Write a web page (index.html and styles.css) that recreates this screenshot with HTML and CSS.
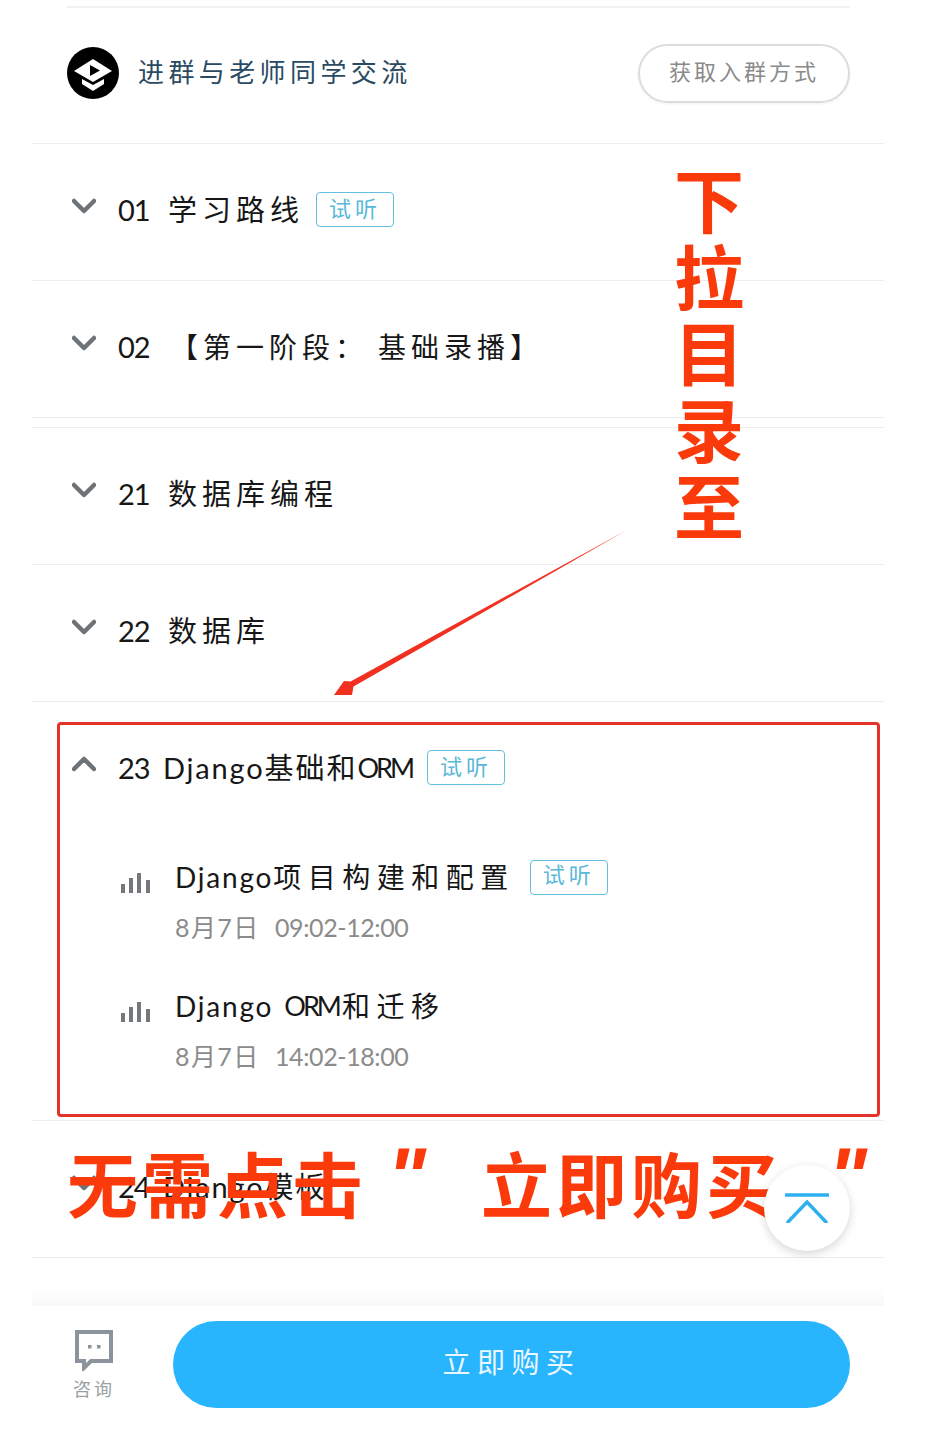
FILE: index.html
```html
<!DOCTYPE html>
<html lang="zh-CN">
<head>
<meta charset="utf-8">
<title>课程目录</title>
<link rel="stylesheet" href="styles.css">
</head>
<body>
<main class="page">
  <div class="top-line"></div>
  <section class="group">
    <svg class="group-logo" viewBox="0 0 52 52"><circle cx="26" cy="26" r="26" fill="#000"/><path d="M26 12 45 24 26 35 7 24Z" fill="#fff"/><path d="M15 32 26 38 37 32V37L26 44 15 37Z" fill="#fff"/><path d="M23 18 33 23.500 23 29Z" fill="#000"/></svg>
    <span class="group-text">进群与老师同学交流</span>
    <a class="group-btn">获取入群方式</a>
  </section>

  <div class="list">
    <div class="row">
      <svg class="chev" viewBox="0 0 24 16"><path d="M2 3 12 13 22 3"/></svg>
      <span class="title"><span class="num">01</span><span class="t1">学习路线</span></span><span class="tag">试听</span>
    </div>
    <div class="row">
      <svg class="chev" viewBox="0 0 24 16"><path d="M2 3 12 13 22 3"/></svg>
      <span class="title"><span class="num">02</span><span class="t2">【第一阶段：<span class="t2-b">基础录播】</span></span></span>
    </div>
    <div class="gap"></div>
    <div class="row">
      <svg class="chev" viewBox="0 0 24 16"><path d="M2 3 12 13 22 3"/></svg>
      <span class="title"><span class="num">21</span><span class="t3">数据库编程</span></span>
    </div>
    <div class="row">
      <svg class="chev" viewBox="0 0 24 16"><path d="M2 3 12 13 22 3"/></svg>
      <span class="title"><span class="num">22</span><span class="t3">数据库</span></span>
    </div>
    <div class="open">
      <div class="open-head">
        <svg class="chev" viewBox="0 0 24 16"><path d="M2 13 12 3 22 13"/></svg>
        <span class="title"><span class="num short">23</span><span class="latin">Django</span><span class="cn-tight">基础和</span><span class="orm">ORM</span></span><span class="tag">试听</span>
      </div>
      <div class="lesson first">
        <svg class="bars" viewBox="0 0 30 22"><path d="M2 12V21M10 6V21M18 1V21M27 8V21"/></svg>
        <div class="lesson-body">
          <div class="lesson-title"><span class="latin">Django</span><span class="cn-tight">项目构建和配置</span><span class="tag">试听</span></div>
          <div class="lesson-time"><span class="date">8月7日</span><span>09:02-12:00</span></div>
        </div>
      </div>
      <div class="lesson">
        <svg class="bars" viewBox="0 0 30 22"><path d="M2 12V21M10 6V21M18 1V21M27 8V21"/></svg>
        <div class="lesson-body">
          <div class="lesson-title"><span class="latin">Django</span><span class="orm orm-2">ORM</span><span class="cn-tight">和迁移</span></div>
          <div class="lesson-time"><span class="date">8月7日</span><span>14:02-18:00</span></div>
        </div>
      </div>
    </div>
    <div class="row">
      <svg class="chev" viewBox="0 0 24 16"><path d="M2 3 12 13 22 3"/></svg>
      <span class="title"><span class="num short">24</span><span class="latin">Django</span><span class="cn-tight">模板</span></span>
    </div>
  </div>
  <div class="fade"></div>
  <footer class="bar">
    <div class="consult">
      <svg class="consult-icon" viewBox="0 0 38 41"><path d="M2 2H36V31H16L9 38V31H2Z"/><rect x="13" y="15" width="3.5" height="3.5"/><rect x="22" y="15" width="3.5" height="3.5"/></svg>
      <span>咨询</span>
    </div>
    <a class="buy">立即购买</a>
  </footer>

  <div class="mark-box"></div>
  <svg class="arrow" viewBox="0 0 944 1436"><path d="M627 530 353.500 686.600 352 695 334 695 344 681 350.500 681.400Z"/></svg>
  <div class="note-v">下拉目录至</div>
  <div class="note-h"><span>无需点击</span><span class="q1">"</span><span class="buy-note">立即购买</span><span class="q2">"</span></div>
  <button class="to-top" aria-label="回到顶部"><svg viewBox="0 0 44 30"><path d="M1 2H43M3 29 22 9 41 29"/></svg></button>
</main>
</body>
</html>
```
FILE: styles.css
```css
* { box-sizing: border-box; }
html, body { margin: 0; padding: 0; background: #fff; }
body { font-family: "Lato", "Noto Sans CJK SC", sans-serif; color: #1a1a1a; }
.page { position: relative; width: 944px; height: 1436px; overflow: hidden; background: #fff; }
.top-line { height: 2px; margin: 6px 94px 0 67px; background: #f1f1f1; }
.group { display: flex; align-items: center; height: 135px; margin: 0 94px 0 67px; }
.group-logo { width: 52px; height: 52px; flex: none; margin-top: -5px; }
.group-text { margin-left: 19px; margin-top: -7px; font-size: 26px; letter-spacing: 4.4px; line-height: 36px; color: #2b4a62; white-space: nowrap; }
.group-btn { margin-left: auto; margin-top: -5px; width: 212px; height: 59px; padding-bottom: 6px; display: flex; align-items: center; justify-content: center; border: 2px solid #dcdcdc; border-radius: 30px; font-size: 22px; letter-spacing: 3px; color: #8a8a8a; box-shadow: 0 1px 3px rgba(0,0,0,.06); }
.list { margin: 0 60px 0 32px; border-top: 1px solid #ececec; }
.row { display: flex; align-items: flex-start; height: 137px; padding: 48px 0 0 40px; border-bottom: 1px solid #ececec; }
.gap { height: 10px; border-bottom: 1px solid #ececec; }
.chev { width: 24px; height: 16px; flex: none; margin-top: 6px; fill: none; stroke: #6e7377; stroke-width: 4.5; stroke-linecap: round; stroke-linejoin: round; }
.title { margin-left: 22px; display: flex; align-items: center; height: 36px; font-size: 29px; line-height: 36px; white-space: nowrap; color: #171717; }
.num { width: 50px; letter-spacing: -1px; }
.num.short { width: 45px; }
.t1 { letter-spacing: 5px; }
.t2 { letter-spacing: 5px; margin-left: 2px; font-size: 28px; }
.t2-b { margin-left: 10px; }
.t3 { letter-spacing: 5px; }
.latin { letter-spacing: 1.8px; }
.cn-tight { letter-spacing: 5px; }
.title .cn-tight { letter-spacing: 2px; font-size: 29px; }
.orm { letter-spacing: -3px; font-size: 27px; margin-right: 3px; }
.orm-2 { margin-left: 11px; }
.tag { display: inline-flex; align-items: center; justify-content: center; flex: none; width: 78px; height: 35px; margin: 0 0 0 12px; padding-bottom: 5px; border: 1.5px solid #62bfdf; border-radius: 4px; font-size: 22px; letter-spacing: 4px; color: #5ab8d8; background: #fff; }
.open { height: 419px; padding: 48px 0 0 40px; border-bottom: 1px solid #ececec; }
.open-head { display: flex; align-items: flex-start; }
.lesson { display: flex; align-items: flex-start; margin: 45px 0 0 49px; }
.lesson.first { margin-top: 73px; }
.bars { width: 30px; height: 22px; flex: none; margin-top: 13px; fill: none; stroke: #74787c; stroke-width: 4; }
.lesson-body { margin-left: 24px; }
.lesson-title { display: flex; align-items: center; height: 36px; font-size: 28px; line-height: 36px; white-space: nowrap; color: #171717; }
.lesson-title .cn-tight { letter-spacing: 6.5px; }
.lesson-title .tag { margin-left: 15px; }
.lesson-time { display: flex; margin-top: 16px; height: 32px; align-items: center; font-size: 25px; line-height: 32px; letter-spacing: -.4px; color: #8b8b8b; white-space: nowrap; }
.date { width: 100px; letter-spacing: 1.4px; }
.fade { height: 48px; margin: 0 60px 0 32px; background: linear-gradient(#fff 60%, #f8f8f9); }
.bar { display: flex; align-items: flex-start; padding: 15px 94px 0 75px; }
.consult { width: 38px; display: flex; flex-direction: column; align-items: center; padding-top: 9px; font-size: 18px; line-height: 22px; letter-spacing: 3px; color: #9a9fa3; white-space: nowrap; }
.consult-icon { width: 38px; height: 41px; margin-bottom: 7px; fill: none; stroke: #8b949c; stroke-width: 4; flex: none; }
.consult-icon rect { fill: #8b949c; stroke: none; }
.buy { margin-left: 60px; flex: 1; height: 87px; padding-bottom: 8px; display: flex; align-items: center; justify-content: center; border-radius: 44px; background: #29b4fe; color: #eaf7ff; font-size: 28px; letter-spacing: 6.5px; }
.mark-box { position: absolute; left: 57px; top: 722px; width: 823px; height: 395px; border: 3px solid #e5332c; border-radius: 4px; }
.arrow { position: absolute; left: 0; top: 0; width: 944px; height: 1436px; fill: #f2301f; pointer-events: none; }
.note-v { position: absolute; left: 674px; top: 160px; width: 70px; font-family: "Noto Sans CJK SC", sans-serif; font-size: 70px; line-height: 76.5px; font-weight: 700; color: #fb3a0b; text-align: center; }
.note-h { position: absolute; left: 67px; top: 1137px; display: flex; align-items: center; height: 88px; font-family: "Noto Sans CJK SC", sans-serif; font-size: 71px; line-height: 88px; font-weight: 700; letter-spacing: 4px; color: #fb3a0b; white-space: nowrap; }
.q1, .q2 { font-style: italic; font-family: "Liberation Sans", sans-serif; font-size: 82px; letter-spacing: 0; position: relative; top: -4px; }
.q1 { margin-left: 20px; width: 94px; }
.q2 { margin-left: 47px; }
.to-top { position: absolute; left: 764px; top: 1165px; width: 86px; height: 86px; padding: 0; display: flex; align-items: center; justify-content: center; border: 0; border-radius: 50%; background: #fff; box-shadow: 0 3px 10px rgba(0,0,0,.16); }
.to-top svg { width: 44px; height: 30px; fill: none; stroke: #2eb0ef; stroke-width: 3.5; stroke-linecap: round; }
```
